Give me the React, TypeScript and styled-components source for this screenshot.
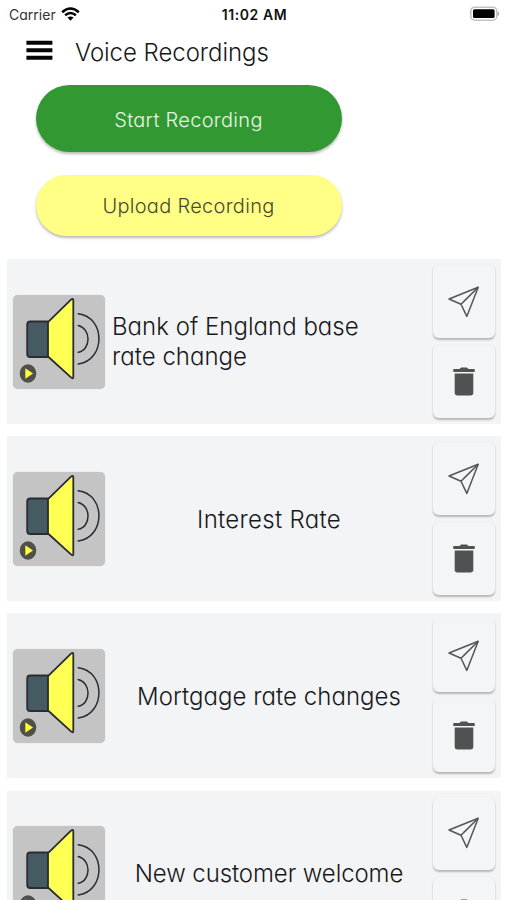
import React from "react";
import styled, { createGlobalStyle } from "styled-components";

const GlobalStyle = createGlobalStyle`
  html, body { margin: 0; height: 100%; overflow: hidden; background: #fff; }
  * { box-sizing: border-box; }
  body { font-family: Inter, "Liberation Sans", sans-serif; font-feature-settings: "cv11" 1; color: #18191b; }
  button { font: inherit; font-feature-settings: inherit; border: 0; padding: 0; }
  svg { display: block; flex: none; }
`;

const Screen = styled.main`
  width: 507px;
  height: 900px;
  overflow: hidden;
  background: #fff;
`;

const StatusBar = styled.div`
  height: 28px;
  padding: 0 7px 0 9px;
  display: grid;
  grid-template-columns: 1fr auto 1fr;
  align-items: center;
  font-size: 14px;
`;

const Carrier = styled.span`
  display: flex;
  align-items: center;
  gap: 5px;
  color: #333;
  letter-spacing: 0.02px;
`;

const Clock = styled.span`
  font-weight: 600;
  letter-spacing: 0.55px;
  color: #111;
`;

const BatteryWrap = styled.span`
  justify-self: end;
`;

const Header = styled.header`
  height: 57px;
  padding: 0 26px;
  display: flex;
  align-items: flex-start;
  gap: 22px;
`;

const MenuButton = styled.button`
  width: 27px;
  height: 20px;
  margin-top: 12px;
  background: none;
`;

const Title = styled.h1`
  margin: 10px 0 0;
  font-size: 24px;
  line-height: 30px;
  font-weight: 300;
  letter-spacing: -0.05px;
  white-space: nowrap;
`;

const Actions = styled.div`
  height: 174px;
  padding-left: 36px;
  display: flex;
  flex-direction: column;
  gap: 23px;
`;

const PillButton = styled.button<{ $tone: "green" | "yellow" }>`
  width: 306px;
  height: ${({ $tone }) => ($tone === "green" ? 67 : 61)}px;
  border-radius: 34px;
  background: ${({ $tone }) => ($tone === "green" ? "#329932" : "#ffff85")};
  color: ${({ $tone }) => ($tone === "green" ? "#e4f5e1" : "#4b4a30")};
  box-shadow: 0 2px 3px rgba(0, 0, 0, 0.28);
  font-size: 20px;
  font-weight: 300;
  letter-spacing: 0.3px;
  padding: ${({ $tone }) => ($tone === "green" ? "2px 1px 0 0" : "0 1px 0 0")};
`;

const List = styled.ul`
  margin: 0;
  padding: 0 6px 0 7px;
  list-style: none;
  display: flex;
  flex-direction: column;
  gap: 12.2px;
`;

const Row = styled.li`
  height: 165px;
  flex: none;
  padding: 0 6px;
  display: flex;
  align-items: center;
  background: #f3f4f6;
`;

const Thumb = styled.button`
  width: 92px;
  height: 94px;
  flex: none;
  border-radius: 5px;
  background: #c4c4c4;
  overflow: hidden;
  box-shadow: 0 0 1px #bbb;
`;

const Name = styled.div<{ $start?: boolean; $tracking: number }>`
  width: 312px;
  margin: 0 8px 0 ${({ $start }) => ($start ? 7 : 8)}px;
  flex: ${({ $start }) => ($start ? "1 0 auto" : "none")};
  padding: ${({ $start }) => ($start ? "0 50px 0 0" : "2px 0 0")};
  text-align: ${({ $start }) => ($start ? "left" : "center")};
  font-size: 24px;
  line-height: 30px;
  font-weight: 300;
  letter-spacing: ${({ $tracking }) => $tracking}px;
`;

const Tools = styled.div`
  display: flex;
  flex-direction: column;
  gap: 7px;
`;

const ToolButton = styled.button`
  width: 62px;
  height: 73px;
  border-radius: 6px;
  display: flex;
  align-items: center;
  justify-content: center;
  background: #f4f5f7;
  box-shadow: 0 1.5px 2px rgba(0, 0, 0, 0.25);
`;

const WifiIcon = () => (
  <svg width="19" height="14" viewBox="0 0 19 14" fill="none" stroke="#000" strokeWidth="2.5">
    <path d="M1.2 5.2Q9.5-2.2 17.8 5.2M4.1 8.3Q9.5 3.6 14.9 8.3" />
    <path d="M6.5 10.6Q9.5 8.4 12.5 10.6L9.5 13.7Z" fill="#000" stroke="none" />
  </svg>
);

const BatteryIcon = () => (
  <svg width="30" height="16" viewBox="0 0 30 16">
    <rect x=".8" y="1.2" width="26" height="13" rx="4" fill="#fff" stroke="#c3c3c3" strokeWidth="1.6" />
    <rect x="3" y="3.3" width="21.6" height="8.8" rx="1.5" fill="#000" />
    <path d="M27.7 5.2Q31 7.7 27.7 10.2Z" fill="#aaa" />
  </svg>
);

const MenuIcon = () => (
  <svg width="27" height="20" viewBox="0 0 27 20" fill="#050505">
    <path d="M.4.8h26v4H.4zM.4 8.3h26v4H.4zM.4 15.8h26v4H.4z" />
  </svg>
);

const SpeakerIcon = () => (
  <svg width="92" height="94" viewBox="0 0 92 94" fill="none" stroke="#292c31" strokeWidth="1.8" strokeLinejoin="round">
    <rect x="14.2" y="26.5" width="23" height="35.5" rx="3" fill="#465a64" />
    <path d="M35 27.2L58 4.6Q60.3 2.7 60.3 5.2V81.7Q60.3 84.5 58 82.4L35 61.5Z" fill="#ffff54" />
    <path d="M65.2 18.7C92.7 22 93 65.1 65.2 69M65.2 30.5C78.3 33.5 78.3 54.8 65.2 57.3" strokeWidth="1.5" strokeLinecap="round" />
    <ellipse cx="15" cy="78.5" rx="8.3" ry="9.2" fill="#50504b" stroke="none" />
    <path d="M12.3 73.2L20 78.4L12.3 83.7Z" fill="#ffff3b" stroke="none" />
  </svg>
);

const SendIcon = () => (
  <svg width="32" height="32" viewBox="0 0 32 32" fill="none" stroke="#555" strokeWidth="1.5" strokeLinejoin="round">
    <path d="M30.2 1.2L1 13L13 18.2L18.8 30.4Z" />
    <path d="M30.2 1.2L13 18.2M30.2 1.2L15.6 15.6" />
  </svg>
);

const TrashIcon = () => (
  <svg width="24" height="29" viewBox="0 0 24 29" fill="#505151">
    <path d="M1.3 2h6.2l1.6-1.5h5.8L16.5 2h6.2v3H1.3zM2.7 6.6h18.6v19.2q0 2.7-2.7 2.7H5.4q-2.7 0-2.7-2.7z" />
  </svg>
);

const recordings = [
  { name: "Bank of England base rate change", start: true, tracking: 0.02 },
  { name: "Interest Rate", tracking: 0.3 },
  { name: "Mortgage rate changes", tracking: 0.04 },
  { name: "New customer welcome", tracking: -0.1 },
];

export default function App() {
  return (
    <>
      <GlobalStyle />
      <Screen>
        <StatusBar>
          <Carrier>Carrier <WifiIcon /></Carrier>
          <Clock>11:02 AM</Clock>
          <BatteryWrap><BatteryIcon /></BatteryWrap>
        </StatusBar>
        <Header>
          <MenuButton aria-label="Menu"><MenuIcon /></MenuButton>
          <Title>Voice Recordings</Title>
        </Header>
        <Actions>
          <PillButton $tone="green">Start Recording</PillButton>
          <PillButton $tone="yellow">Upload Recording</PillButton>
        </Actions>
        <List>
          {recordings.map(({ name, start, tracking }) => (
            <Row key={name}>
              <Thumb aria-label={`Play ${name}`}><SpeakerIcon /></Thumb>
              <Name $start={start} $tracking={tracking}>{name}</Name>
              <Tools>
                <ToolButton aria-label="Send"><SendIcon /></ToolButton>
                <ToolButton aria-label="Delete"><TrashIcon /></ToolButton>
              </Tools>
            </Row>
          ))}
        </List>
      </Screen>
    </>
  );
}
